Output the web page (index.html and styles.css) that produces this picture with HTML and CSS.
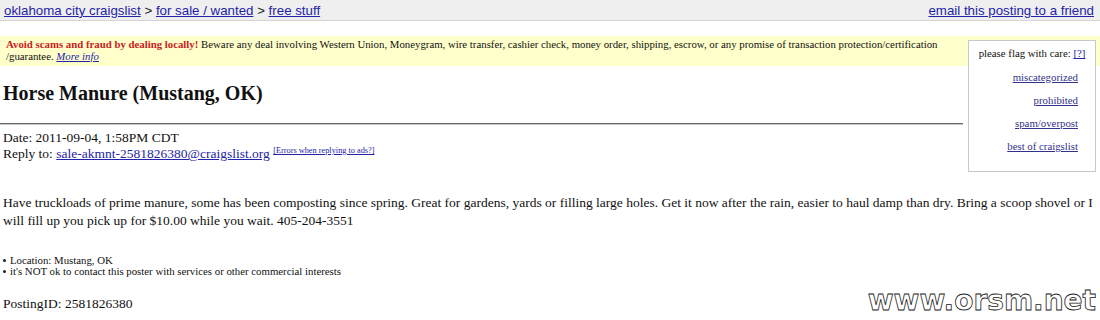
FILE: index.html
```html
<!DOCTYPE html>
<html>
<head>
<meta charset="utf-8">
<link rel="stylesheet" href="styles.css">
</head>
<body>
<div class="topbar">
  <div class="crumbs"><a href="#">oklahoma city craigslist</a> &gt; <a href="#">for sale / wanted</a> &gt; <a href="#">free stuff</a></div>
  <div class="email"><a href="#">email this posting to a friend</a></div>
</div>
<div class="main">
  <div class="flagbox">
    <div class="flaghead">please flag with care: <a href="#">[?]</a></div>
    <a class="flag" href="#">miscategorized</a>
    <a class="flag" href="#">prohibited</a>
    <a class="flag" href="#">spam/overpost</a>
    <a class="flag" href="#">best of craigslist</a>
  </div>
  <div class="warning"><span class="warnhead">Avoid scams and fraud by dealing locally!</span> Beware any deal involving Western Union, Moneygram, wire transfer, cashier check, money order, shipping, escrow, or any promise of transaction protection/certification /guarantee. <a class="more" href="#">More info</a></div>
  <h2 class="title">Horse Manure (Mustang, OK)</h2>
  <hr class="rule">
  <div class="meta">
    <div>Date: 2011-09-04, 1:58PM CDT</div>
    <div>Reply to: <a href="#">sale-akmnt-2581826380@craigslist.org</a> <sup class="errs"><a href="#">[Errors when replying to ads?]</a></sup></div>
  </div>
  <div class="body">Have truckloads of prime manure, some has been composting since spring. Great for gardens, yards or filling large holes. Get it now after the rain, easier to haul damp than dry. Bring a scoop shovel or I will fill up you pick up for $10.00 while you wait. 405-204-3551</div>
  <ul class="facts">
    <li>Location: Mustang, OK</li>
    <li>it's NOT ok to contact this poster with services or other commercial interests</li>
  </ul>
  <div class="pid">PostingID: 2581826380</div>
</div>
<div class="watermark">www.orsm.net</div>
</body>
</html>
```

FILE: styles.css
```css
html, body {
  margin: 0;
  padding: 0;
  background: #fff;
}
body {
  font-family: "Liberation Serif", "Times New Roman", serif;
  color: #111;
  width: 1100px;
  height: 320px;
  overflow: hidden;
  position: relative;
}
a {
  color: #2323a8;
}
.topbar {
  display: flex;
  justify-content: space-between;
  align-items: center;
  height: 20px;
  padding: 0 6px 0 4px;
  background: #efefef;
  border-bottom: 1px solid #d4d4d4;
  font-family: "Liberation Sans", Arial, sans-serif;
  font-size: 13.3px;
  color: #222;
}
.main {
  padding-top: 15px;
}
.flagbox {
  float: right;
  width: 120px;
  height: 124px;
  margin: 4px 4px 0 5px;
  padding: 3px;
  background: #fff;
  border: 1px solid #c8c8c8;
  display: flex;
  flex-direction: column;
  align-items: flex-end;
  font-size: 10.8px;
}
.flaghead {
  margin-top: 3px;
  margin-bottom: 12px;
  align-self: center;
  white-space: nowrap;
}
.flag {
  margin-right: 14px;
  line-height: 12px;
  margin-bottom: 11px;
  color: #32328c;
}
.warning {
  background: #ffffcc;
  font-size: 10.8px;
  line-height: 12px;
  padding: 2px 6px 4px 6px;
}
.warnhead {
  color: #c8221e;
  font-weight: bold;
}
.more {
  font-style: italic;
}
.title {
  font-size: 20px;
  font-weight: bold;
  margin: 0;
  padding: 15px 3px 0;
  line-height: 24px;
}
.rule {
  overflow: hidden;
  margin: 18px 0 0 0;
  height: 0;
  border: 0;
  border-top: 1px solid #6b6b6b;
  border-bottom: 1px solid #c4c4c4;
}
.meta {
  font-size: 13.5px;
  line-height: 16px;
  padding: 5px 3px 0;
}
.errs {
  font-size: 8.3px;
  vertical-align: 5px;
  line-height: 0;
}
.body {
  clear: right;
  font-size: 13.5px;
  line-height: 18px;
  padding: 22px 3px 0;
}
.facts {
  list-style: none;
  margin: 0;
  padding: 25px 0 0 3px;
  font-size: 10.8px;
  line-height: 11px;
}
.facts li {
  display: flex;
  align-items: center;
  gap: 4px;
}
.facts li::before {
  content: "";
  width: 3px;
  height: 3px;
  border-radius: 50%;
  background: #222;
  flex: none;
}
.pid {
  font-size: 13.5px;
  line-height: 16px;
  padding: 19px 3px 0;
}
.watermark {
  position: absolute;
  right: 4px;
  bottom: 4px;
  font-family: "DejaVu Sans", sans-serif;
  font-weight: bold;
  font-size: 28px;
  color: #fff;
  -webkit-text-stroke: 0.8px #222;
  line-height: 30px;
}
```
